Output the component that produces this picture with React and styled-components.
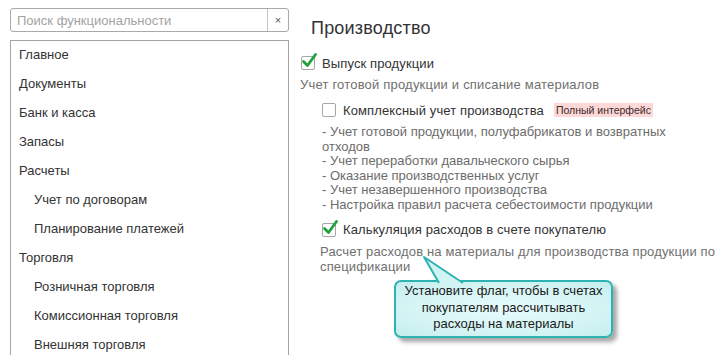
import React from "react";
import styled, { createGlobalStyle } from "styled-components";

const GlobalStyle = createGlobalStyle`
  html, body {
    margin: 0;
    padding: 0;
    background: #fff;
    overflow: hidden;
  }
  body {
    font-family: "Liberation Sans", Arial, sans-serif;
    font-size: 13px;
    color: #333;
  }
`;

const menu = [
  { title: "Главное" },
  { title: "Документы" },
  { title: "Банк и касса" },
  { title: "Запасы" },
  { title: "Расчеты" },
  { title: "Учет по договорам", sub: true },
  { title: "Планирование платежей", sub: true },
  { title: "Торговля" },
  { title: "Розничная торговля", sub: true },
  { title: "Комиссионная торговля", sub: true },
  { title: "Внешняя торговля", sub: true },
];

const features = [
  "- Учет готовой продукции, полуфабрикатов и возвратных",
  "отходов",
  "- Учет переработки давальческого сырья",
  "- Оказание производственных услуг",
  "- Учет незавершенного производства",
  "- Настройка правил расчета себестоимости продукции",
];

const Check = ({ checked }) => (
  <Box>
    {checked && (
      <svg width="18" height="18" viewBox="0 0 18 18">
        <path
          d="M3.5 9.5 L7.5 13.5 L15.5 2.5"
          fill="none"
          stroke="#1fa23a"
          strokeWidth="2.8"
          strokeLinecap="round"
          strokeLinejoin="round"
        />
      </svg>
    )}
  </Box>
);

const App = () => {
  return (
    <Page>
      <GlobalStyle />
      <Sidebar>
        <Search>
          <SearchInput placeholder="Поиск функциональности" />
          <ClearBtn type="button">×</ClearBtn>
        </Search>
        <MenuList>
          {menu.map((m, index) => (
            <MenuItem key={index} $sub={m.sub}>
              {m.title}
            </MenuItem>
          ))}
        </MenuList>
      </Sidebar>

      <Content>
        <Title>Производство</Title>

        <Option>
          <Check checked />
          <span>Выпуск продукции</span>
        </Option>
        <Description>Учет готовой продукции и списание материалов</Description>

        <Option $indent $top={8}>
          <Check />
          <span>Комплексный учет производства</span>
          <Badge>Полный интерфейс</Badge>
        </Option>
        <FeatureList>
          {features.map((f, index) => (
            <div key={index}>{f}</div>
          ))}
        </FeatureList>

        <Option $indent $top={8}>
          <Check checked />
          <span>Калькуляция расходов в счете покупателю</span>
        </Option>
        <SubDescription>
          Расчет расходов на материалы для производства продукции по
          <br />
          спецификации
        </SubDescription>
      </Content>

      <Callout>
        <Tail width="48" height="30" viewBox="0 0 48 30">
          <polygon points="3,3 18,29 42,29" fill="#d2f3f3" />
          <polyline
            points="18,29 3,3 42,29"
            fill="none"
            stroke="#2eb3b3"
            strokeWidth="2"
            strokeLinejoin="round"
          />
        </Tail>
        Установите флаг, чтобы в счетах
        <br />
        покупателям рассчитывать
        <br />
        расходы на материалы
      </Callout>
    </Page>
  );
};

const Page = styled.div`
  position: relative;
  display: flex;
  gap: 11px;
  width: 728px;
  height: 355px;
  padding: 8px 0 0 10px;
  box-sizing: border-box;
  overflow: hidden;
`;

const Sidebar = styled.aside`
  display: flex;
  flex-direction: column;
  gap: 8px;
  width: 279px;
  flex-shrink: 0;
`;

const Search = styled.div`
  display: flex;
  flex-shrink: 0;
  height: 24px;
  border: 1px solid #a9a9a9;
  border-radius: 3px;
  box-sizing: border-box;
  background: #fff;
`;

const SearchInput = styled.input`
  flex: 1;
  min-width: 0;
  border: none;
  outline: none;
  padding: 0 6px;
  font-family: "Liberation Sans", Arial, sans-serif;
  font-size: 13px;
  color: #333;
  background: transparent;
  &::placeholder {
    color: #a3a3a3;
  }
`;

const ClearBtn = styled.button`
  width: 21px;
  padding: 0;
  border: none;
  border-left: 1px solid #c4c4c4;
  background: transparent;
  color: #555;
  font-family: "Liberation Sans", Arial, sans-serif;
  font-size: 11px;
  cursor: pointer;
`;

const MenuList = styled.ul`
  list-style: none;
  flex-shrink: 0;
  margin: 0;
  padding: 0;
  height: 330px;
  border: 1px solid #a5a5a5;
  box-sizing: border-box;
`;

const MenuItem = styled.li`
  height: 29px;
  line-height: 28px;
  padding-left: ${(p) => (p.$sub ? "23px" : "8px")};
  color: #333;
  white-space: nowrap;
`;

const Content = styled.main`
  display: flex;
  flex-direction: column;
  align-items: flex-start;
  flex: 1;
  min-width: 0;
`;

const Title = styled.h1`
  margin: 9px 0 0 11px;
  font-size: 18px;
  font-weight: normal;
  line-height: 22px;
  color: #333;
  letter-spacing: 0.2px;
`;

const Option = styled.label`
  display: flex;
  align-items: center;
  height: 18px;
  margin-top: ${(p) => (p.$top ? `${p.$top}px` : "15px")};
  margin-left: ${(p) => (p.$indent ? "22px" : "1px")};
  color: #333;
  white-space: nowrap;
  letter-spacing: 0.12px;
`;

const Box = styled.span`
  position: relative;
  width: 14px;
  height: 14px;
  margin-right: 7px;
  border: 1px solid #a6a6a6;
  border-radius: 2px;
  box-sizing: border-box;
  background: #fff;
  flex-shrink: 0;
  svg {
    position: absolute;
    left: -2px;
    top: -5px;
  }
`;

const Badge = styled.span`
  margin-left: 10px;
  padding: 1px 2px;
  background: #fdd8d8;
  color: #3a2a2a;
  font-size: 10.5px;
  line-height: 12px;
  letter-spacing: 0;
`;

const Description = styled.p`
  margin: 5px 0 0;
  line-height: 16px;
  color: #707070;
  white-space: nowrap;
  letter-spacing: 0.2px;
`;

const FeatureList = styled.div`
  margin: 6px 0 0 22px;
  line-height: 14.6px;
  color: #6c6c6c;
  white-space: nowrap;
`;

const SubDescription = styled.p`
  margin: 5px 0 0 20px;
  line-height: 15px;
  color: #707070;
  white-space: nowrap;
  letter-spacing: 0.15px;
`;

const Callout = styled.div`
  position: absolute;
  left: 394px;
  top: 280px;
  width: 219px;
  padding: 1px 0 3px;
  box-sizing: border-box;
  border: 2px solid #2eb3b3;
  border-radius: 7px;
  background: radial-gradient(ellipse at center, #e6fbfb 0%, #d2f3f3 70%, #c4eded 100%);
  box-shadow: 4px 4px 4px rgba(0, 0, 0, 0.35);
  text-align: center;
  font-size: 13px;
  line-height: 16.5px;
  color: #1a1a1a;
`;

const Tail = styled.svg`
  position: absolute;
  left: 25px;
  top: -28px;
  display: block;
`;

export default App;
